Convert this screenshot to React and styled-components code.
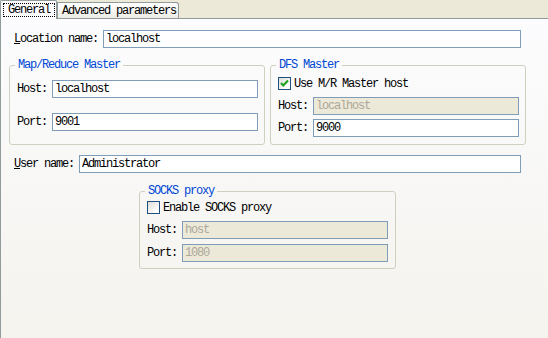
import React from 'react';
import styled, { createGlobalStyle } from 'styled-components';

const GlobalStyle = createGlobalStyle`
  html, body {
    margin: 0;
    height: 100%;
    background: #ece9d8;
  }
  #root {
    height: 100%;
  }
`;

const font = `
  font-family: "Liberation Mono", "DejaVu Sans Mono", monospace;
  font-size: 12px;
  letter-spacing: -1.2px;
  line-height: 12px;
  color: #000;
`;

const Frame = styled.div`
  ${font}
  height: 100%;
  display: flex;
  flex-direction: column;
`;

const TabBar = styled.div`
  height: 18px;
  display: flex;
  align-items: flex-end;
  background: #ece9d8;
`;

const ActiveTab = styled.div`
  position: relative;
  z-index: 1;
  height: 19px;
  margin-bottom: -1px;
  box-sizing: border-box;
  padding: 2px 1px 0 2px;
  border: 1px solid #919b9c;
  border-bottom: none;
  border-radius: 2px 2px 0 0;
  background: #fcfcfe;
`;

const Focus = styled.span`
  display: block;
  padding: 0 4px;
  border: 1px dotted #000;
`;

const Tab = styled.div`
  height: 16px;
  box-sizing: border-box;
  padding: 2px 2px 0 4px;
  border: 1px solid #919b9c;
  border-bottom: none;
  border-radius: 0 3px 0 0;
  background: linear-gradient(#ffffff, #ecebe6);
`;

const Panel = styled.div`
  flex: 1;
  border-top: 1px solid #919b9c;
  border-left: 1px solid #919b9c;
  background: linear-gradient(#fcfcfe, #f4f3ee);
  padding: 11px 22px 0 8px;
  display: flex;
  flex-direction: column;
`;

const FieldRow = styled.div`
  display: grid;
  grid-template-columns: auto 1fr;
  column-gap: 5px;
  align-items: center;
  padding: 0 5px;
  margin-top: ${(p) => p.$top || 0}px;
`;

const GroupsRow = styled.div`
  margin-top: 11px;
  display: grid;
  grid-template-columns: 256px 256px;
  column-gap: 5px;
`;

const Centered = styled.div`
  margin-top: 12px;
  display: flex;
  justify-content: center;
`;

const Group = styled.fieldset`
  margin: 0;
  padding: 0;
  min-width: 0;
  width: ${(p) => p.$width}px;
  box-sizing: border-box;
  border: 1px solid #d0d0bf;
  border-radius: 3px;
`;

const Legend = styled.legend`
  margin-left: 5px;
  padding: 0 3px;
  color: #0046d5;
  line-height: 12px;
`;

const GroupBody = styled.div`
  display: grid;
  grid-template-columns: 30px 1fr;
  column-gap: 5px;
  row-gap: ${(p) => p.$gap}px;
  align-items: center;
  padding: ${(p) => p.$pad};
`;

const Label = styled.span`
  white-space: pre;
`;

const Input = styled.input`
  ${font}
  height: 18px;
  width: 100%;
  box-sizing: border-box;
  margin: 0;
  padding: 0 2px;
  border: 1px solid #7f9db9;
  border-radius: 0;
  background: #fff;
  outline: none;

  &:disabled {
    background: #ece9d8;
    color: #aca899;
    -webkit-text-fill-color: #aca899;
    opacity: 1;
  }
`;

const CheckRow = styled.label`
  grid-column: 1 / -1;
  display: flex;
  align-items: center;
  gap: 3px;
  height: 13px;
  margin-bottom: ${(p) => p.$after}px;
`;

const Box = styled.span`
  width: 13px;
  height: 13px;
  box-sizing: border-box;
  border: 1px solid #1c5180;
  background: linear-gradient(135deg, #dcdcd7, #ffffff 80%);
  display: flex;
`;

function Check({ checked, after, children }) {
  return (
    <CheckRow $after={after}>
      <Box>
        {checked && (
          <svg width="11" height="11" viewBox="0 0 11 11">
            <path d="M2 5 L4.3 7.5 L9 2.6" fill="none" stroke="#21a121" strokeWidth="2.2" />
          </svg>
        )}
      </Box>
      <span>{children}</span>
    </CheckRow>
  );
}

function Field({ label, value, disabled }) {
  return (
    <>
      <Label>{label}</Label>
      <Input readOnly value={value} disabled={disabled} />
    </>
  );
}

export default function App() {
  return (
    <>
      <GlobalStyle />
      <Frame>
        <TabBar>
          <ActiveTab>
            <Focus>General</Focus>
          </ActiveTab>
          <Tab>Advanced parameters</Tab>
        </TabBar>
        <Panel>
          <FieldRow>
            <Label>
              <u>L</u>ocation name:
            </Label>
            <Input readOnly value="localhost" />
          </FieldRow>

          <GroupsRow>
            <Group $width={256}>
              <Legend>Map/Reduce Master</Legend>
              <GroupBody $gap={15} $pad="9px 6px 13px 7px">
                <Field label="Host:" value="localhost" />
                <Field label="Port:" value="9001" />
              </GroupBody>
            </Group>
            <Group $width={256}>
              <Legend>DFS Master</Legend>
              <GroupBody $gap={4} $pad="6px 6px 7px 7px">
                <Check checked after={3}>Use M/R Master host</Check>
                <Field label="Host:" value="localhost" disabled />
                <Field label="Port:" value="9000" />
              </GroupBody>
            </Group>
          </GroupsRow>

          <FieldRow $top={10}>
            <Label>
              <u>U</u>ser name:
            </Label>
            <Input readOnly value="Administrator" />
          </FieldRow>

          <Centered>
            <Group $width={257}>
              <Legend>SOCKS proxy</Legend>
              <GroupBody $gap={5} $pad="4px 7px 6px 7px">
                <Check after={2}>Enable SOCKS proxy</Check>
                <Field label="Host:" value="host" disabled />
                <Field label="Port:" value="1080" disabled />
              </GroupBody>
            </Group>
          </Centered>
        </Panel>
      </Frame>
    </>
  );
}
